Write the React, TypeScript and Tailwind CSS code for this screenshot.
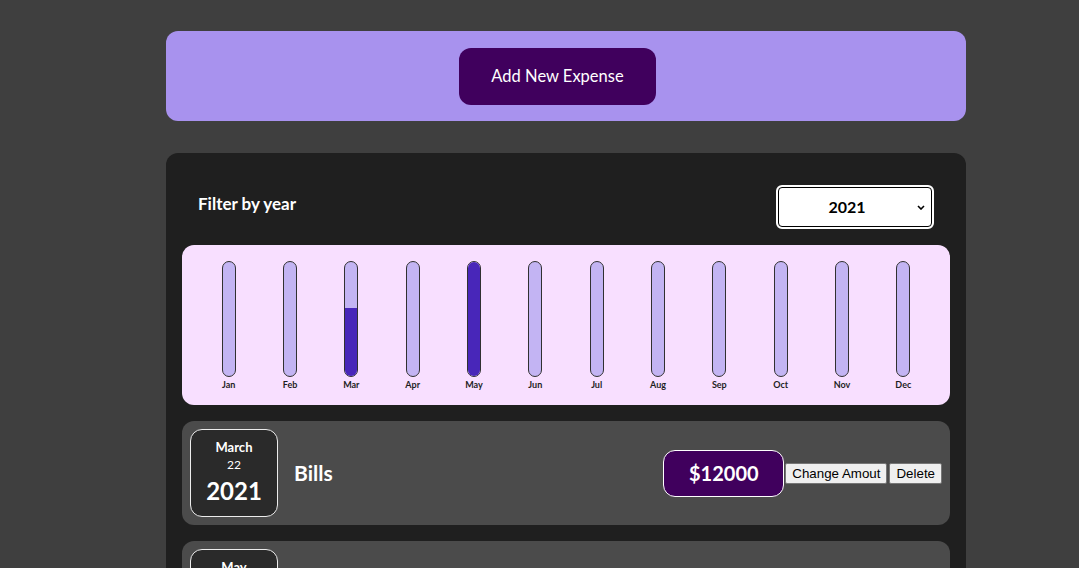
import { useState } from 'react';

const MONTHS = ['Jan', 'Feb', 'Mar', 'Apr', 'May', 'Jun', 'Jul', 'Aug', 'Sep', 'Oct', 'Nov', 'Dec'];

interface Expense {
  id: string;
  title: string;
  amount: number;
  month: number;
  day: number;
  year: number;
}

const EXPENSES: Expense[] = [
  { id: 'e1', title: 'Bills', amount: 12000, month: 2, day: 22, year: 2021 },
  { id: 'e2', title: 'New Car', amount: 20000, month: 4, day: 12, year: 2021 },
];

const MONTH_NAMES = [
  'January', 'February', 'March', 'April', 'May', 'June',
  'July', 'August', 'September', 'October', 'November', 'December',
];

const ChartBar = ({ label, fill }: { label: string; fill: number }) => (
  <div className="flex flex-col items-center">
    <div className="flex h-[116px] w-[14px] flex-col justify-end overflow-hidden rounded-full border border-[#313131] bg-[#c3b4f3]">
      <div className="w-full bg-[#4826b9]" style={{ height: `${fill}%` }} />
    </div>
    <span className="mt-[1px] text-[9px] leading-[13px] font-bold text-[#1e1e1e]">{label}</span>
  </div>
);

const ExpenseDate = ({ expense }: { expense: Expense }) => (
  <div className="flex h-[88px] w-[88px] shrink-0 flex-col items-center justify-center rounded-xl border border-[#ececec] bg-[#2a2a2a] text-white">
    <div className="text-[13px] leading-[20px] font-bold">{MONTH_NAMES[expense.month]}</div>
    <div className="text-[12px] leading-[16px]">{expense.day}</div>
    <div className="text-[24px] leading-[36px] font-bold">{expense.year}</div>
  </div>
);

const ExpenseItem = ({ expense }: { expense: Expense }) => (
  <div className="flex h-[104px] items-center gap-4 rounded-xl bg-[#4b4b4b] p-2">
    <ExpenseDate expense={expense} />
    <h2 className="flex-1 text-[21px] font-bold text-white">{expense.title}</h2>
    <div className="flex items-center">
      <div className="flex h-[47px] w-[121px] items-center justify-center rounded-xl border border-white bg-[#40005d] text-[20px] font-bold text-white">
        ${expense.amount}
      </div>
      <div className="ml-px flex gap-[2px] font-['Liberation_Sans',Arial,sans-serif] text-[13.33px] text-black">
        <button className="h-[21px] rounded-[2px] border border-[#767676] bg-[#efefef] px-[6px]">Change Amout</button>
        <button className="h-[21px] rounded-[2px] border border-[#767676] bg-[#efefef] px-[6px]">Delete</button>
      </div>
    </div>
  </div>
);

export default function App() {
  const [year, setYear] = useState('2021');
  const max = Math.max(...EXPENSES.map((e) => e.amount));

  return (
    <div className="min-h-screen bg-[#3f3f3f] pt-[31px] pb-8 font-['Lato',sans-serif]">
      <div className="ml-[166px] flex h-[90px] w-[800px] items-center justify-center rounded-xl bg-[#a892ee]">
        <button className="mr-[17px] h-[57px] w-[197px] rounded-xl bg-[#40005d] text-[16.5px] text-white">
          Add New Expense
        </button>
      </div>

      <div className="mt-8 ml-[166px] w-[800px] rounded-xl bg-[#1f1f1f] p-4">
        <div className="my-4 flex items-center justify-between px-4">
          <span className="pb-[6px] text-[17px] font-bold text-white">Filter by year</span>
          <div className="relative">
            <select
              value={year}
              onChange={(e) => setYear(e.target.value)}
              className="h-[44px] w-[158px] appearance-none rounded-md border-2 border-white bg-white pr-4 text-center text-[16px] font-bold text-black outline outline-1 -outline-offset-[3px] outline-black"
            >
              <option>2022</option>
              <option>2021</option>
              <option>2020</option>
              <option>2019</option>
            </select>
            <svg className="pointer-events-none absolute top-[20px] right-[9px]" width="8" height="5" viewBox="0 0 8 5">
              <path d="M1 1l3 3 3-3" fill="none" stroke="#000" strokeWidth="1.6" />
            </svg>
          </div>
        </div>

        <div className="grid h-[160px] grid-cols-12 rounded-xl bg-[#f8dfff] p-4">
          {MONTHS.map((m, i) => {
            const total = EXPENSES.filter((e) => e.month === i).reduce((s, e) => s + e.amount, 0);
            return <ChartBar key={m} label={m} fill={(total / max) * 100} />;
          })}
        </div>

        <div className="mt-4 flex flex-col gap-4">
          {EXPENSES.map((e) => (
            <ExpenseItem key={e.id} expense={e} />
          ))}
        </div>
      </div>
    </div>
  );
}
